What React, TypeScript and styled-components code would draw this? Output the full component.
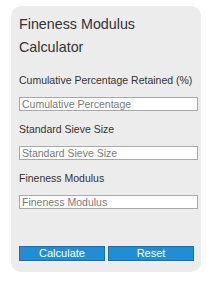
import * as React from 'react';
import styled, { createGlobalStyle } from 'styled-components';

const Global = createGlobalStyle`
  body {
    margin: 0;
    background: #fff;
    font-family: 'Liberation Sans', Arial, sans-serif;
    color: #333;
  }
  * { box-sizing: border-box; }
`;

const Card = styled.div`
  margin: 6px 0 0 11px;
  width: 190px;
  background: #ececec;
  border-radius: 10px;
  padding: 7px 3px 11px 8px;
`;

const Title = styled.h1`
  margin: 0 0 13px;
  font-size: 14.3px;
  line-height: 23px;
  font-weight: normal;
  color: #333;
`;

const Field = styled.div`
  display: flex;
  flex-direction: column;
  margin-bottom: 10px;
`;

const Label = styled.label`
  font-size: 10.5px;
  line-height: 16px;
  color: #333;
  margin-bottom: 9px;
`;

const Input = styled.input`
  width: 179px;
  height: 14px;
  padding: 0 2px;
  margin: 0;
  border: 1px solid #a9a9a9;
  background: #fff;
  font-family: inherit;
  font-size: 10.5px;
  color: #333;
  outline: none;

  &::placeholder {
    color: #7a7a7a;
  }
`;

const Actions = styled.div`
  display: flex;
  gap: 3px;
  margin-top: 37px;
`;

const Button = styled.button`
  width: 86px;
  height: 15px;
  padding: 0;
  border: 1px solid #1b6ea6;
  background: #1e8fd6;
  color: #fff;
  font-family: inherit;
  font-size: 11px;
  line-height: 13px;
  cursor: pointer;
`;

const fields = [
  'Cumulative Percentage Retained (%)',
  'Standard Sieve Size',
  'Fineness Modulus',
];

const placeholders = [
  'Cumulative Percentage',
  'Standard Sieve Size',
  'Fineness Modulus',
];

export default function App() {
  return (
    <>
      <Global />
      <Card>
        <Title>
          Fineness Modulus
          <br />
          Calculator
        </Title>
        {fields.map((f, i) => (
          <Field key={f}>
            <Label>{f}</Label>
            <Input placeholder={placeholders[i]} />
          </Field>
        ))}
        <Actions>
          <Button>Calculate</Button>
          <Button>Reset</Button>
        </Actions>
      </Card>
    </>
  );
}
